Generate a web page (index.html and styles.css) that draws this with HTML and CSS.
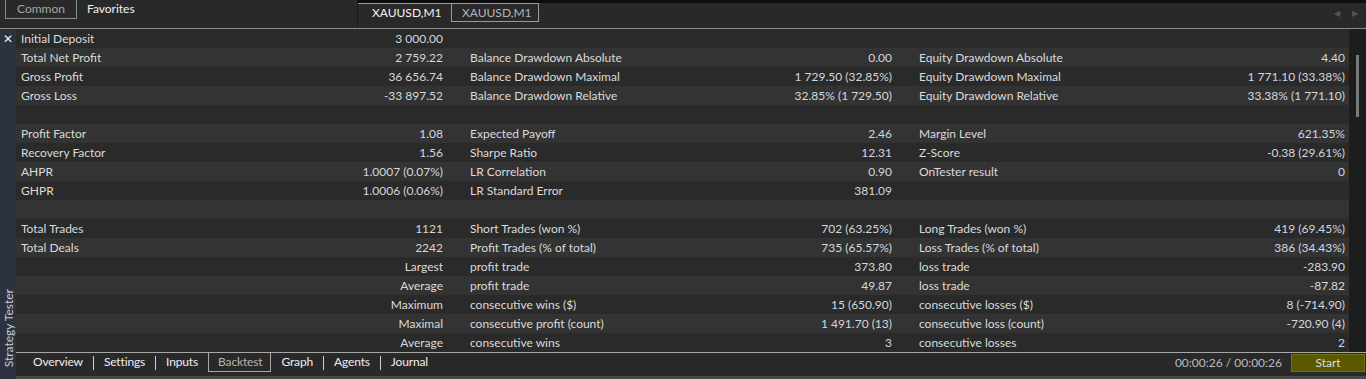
FILE: index.html
```html
<!DOCTYPE html>
<html>
<head>
<meta charset="utf-8">
<link rel="stylesheet" href="styles.css">
</head>
<body>
<div class="top">
  <div class="group-tabs">
    <span class="gtab boxed">Common</span>
    <span class="gtab active">Favorites</span>
  </div>
  <div class="chart-strip">
    <div class="ctab active">XAUUSD,M1</div>
    <div class="ctab outline">XAUUSD,M1</div>
    <div class="strip-fill"></div>
    <div class="arrows"><span class="arr">&#9664;</span><span class="arr">&#9654;</span></div>
  </div>
</div>
<div class="body">
  <div class="sidebar">
    <span class="close">&#10005;</span>
    <span class="vtitle">Strategy Tester</span>
  </div>
  <div class="content">
    <div class="main">
      <div class="table">
        <div class="row"><div class="cell"><span>Initial Deposit</span><span class="v">3 000.00</span></div><div class="cell"></div><div class="cell last"></div></div>
        <div class="row"><div class="cell"><span>Total Net Profit</span><span class="v">2 759.22</span></div><div class="cell"><span>Balance Drawdown Absolute</span><span class="v">0.00</span></div><div class="cell last"><span>Equity Drawdown Absolute</span><span class="v">4.40</span></div></div>
        <div class="row"><div class="cell"><span>Gross Profit</span><span class="v">36 656.74</span></div><div class="cell"><span>Balance Drawdown Maximal</span><span class="v">1 729.50 (32.85%)</span></div><div class="cell last"><span>Equity Drawdown Maximal</span><span class="v">1 771.10 (33.38%)</span></div></div>
        <div class="row"><div class="cell"><span>Gross Loss</span><span class="v">-33 897.52</span></div><div class="cell"><span>Balance Drawdown Relative</span><span class="v">32.85% (1 729.50)</span></div><div class="cell last"><span>Equity Drawdown Relative</span><span class="v">33.38% (1 771.10)</span></div></div>
        <div class="row"><div class="cell"></div><div class="cell"></div><div class="cell last"></div></div>
        <div class="row"><div class="cell"><span>Profit Factor</span><span class="v">1.08</span></div><div class="cell"><span>Expected Payoff</span><span class="v">2.46</span></div><div class="cell last"><span>Margin Level</span><span class="v">621.35%</span></div></div>
        <div class="row"><div class="cell"><span>Recovery Factor</span><span class="v">1.56</span></div><div class="cell"><span>Sharpe Ratio</span><span class="v">12.31</span></div><div class="cell last"><span>Z-Score</span><span class="v">-0.38 (29.61%)</span></div></div>
        <div class="row"><div class="cell"><span>AHPR</span><span class="v">1.0007 (0.07%)</span></div><div class="cell"><span>LR Correlation</span><span class="v">0.90</span></div><div class="cell last"><span>OnTester result</span><span class="v">0</span></div></div>
        <div class="row"><div class="cell"><span>GHPR</span><span class="v">1.0006 (0.06%)</span></div><div class="cell"><span>LR Standard Error</span><span class="v">381.09</span></div><div class="cell last"></div></div>
        <div class="row"><div class="cell"></div><div class="cell"></div><div class="cell last"></div></div>
        <div class="row"><div class="cell"><span>Total Trades</span><span class="v">1121</span></div><div class="cell"><span>Short Trades (won %)</span><span class="v">702 (63.25%)</span></div><div class="cell last"><span>Long Trades (won %)</span><span class="v">419 (69.45%)</span></div></div>
        <div class="row"><div class="cell"><span>Total Deals</span><span class="v">2242</span></div><div class="cell"><span>Profit Trades (% of total)</span><span class="v">735 (65.57%)</span></div><div class="cell last"><span>Loss Trades (% of total)</span><span class="v">386 (34.43%)</span></div></div>
        <div class="row"><div class="cell"><span></span><span class="lbl-r">Largest</span></div><div class="cell"><span>profit trade</span><span class="v">373.80</span></div><div class="cell last"><span>loss trade</span><span class="v">-283.90</span></div></div>
        <div class="row"><div class="cell"><span></span><span class="lbl-r">Average</span></div><div class="cell"><span>profit trade</span><span class="v">49.87</span></div><div class="cell last"><span>loss trade</span><span class="v">-87.82</span></div></div>
        <div class="row"><div class="cell"><span></span><span class="lbl-r">Maximum</span></div><div class="cell"><span>consecutive wins ($)</span><span class="v">15 (650.90)</span></div><div class="cell last"><span>consecutive losses ($)</span><span class="v">8 (-714.90)</span></div></div>
        <div class="row"><div class="cell"><span></span><span class="lbl-r">Maximal</span></div><div class="cell"><span>consecutive profit (count)</span><span class="v">1 491.70 (13)</span></div><div class="cell last"><span>consecutive loss (count)</span><span class="v">-720.90 (4)</span></div></div>
        <div class="row"><div class="cell"><span></span><span class="lbl-r">Average</span></div><div class="cell"><span>consecutive wins</span><span class="v">3</span></div><div class="cell last"><span>consecutive losses</span><span class="v">2</span></div></div>
      </div>
      <div class="scrollbar"><div class="thumb"></div></div>
    </div>
    <div class="bottom">
      <div class="btabs">
        <span class="btab">Overview</span><span class="sep"></span>
        <span class="btab">Settings</span><span class="sep"></span>
        <span class="btab">Inputs</span>
        <span class="btab active">Backtest</span>
        <span class="btab">Graph</span><span class="sep"></span>
        <span class="btab">Agents</span><span class="sep"></span>
        <span class="btab">Journal</span>
      </div>
      <div class="status">
        <span class="time">00:00:26 / 00:00:26</span>
        <button class="start">Start</button>
      </div>
    </div>
    <div class="footer-band"></div>
  </div>
</div>
</body>
</html>
```

FILE: styles.css
```css
* { box-sizing: border-box; }
html, body { margin: 0; padding: 0; }
body {
  width: 1366px;
  height: 379px;
  overflow: hidden;
  background: #292929;
  font-family: Lato, "Noto Sans", sans-serif;
  font-size: 12px;
  color: #dadada;
}
.top {
  height: 29px;
  display: flex;
  border-bottom: 1px solid #8c8c8c;
  background: #292929;
}
.group-tabs {
  width: 357px;
  display: flex;
  align-items: flex-start;
  padding-left: 5px;
}
.gtab {
  height: 19px;
  line-height: 17px;
  padding: 0 10px;
}
.gtab.boxed {
  border: 1px solid #8a8a8a;
  border-top: none;
  color: #a6a6a6;
  width: 72px;
  text-align: center;
  padding: 0;
}
.gtab.active { color: #f2f2f2; padding-left: 10px; }
.chart-strip {
  flex: 1;
  display: flex;
  align-items: stretch;
  border-top: 3px solid #0d0d0d;
  border-left: 1px solid #1a1a1a;
}
.ctab {
  height: 19px;
  line-height: 18px;
  padding: 0 14px;
}
.ctab.active {
  width: 93px;
  height: 25px;
  color: #f4f4f4;
  border-top: 1px solid #9a9a9a;
  padding-left: 14px;
}
.ctab.outline {
  width: 88px;
  color: #b4b4b4;
  border: 1px solid #9a9a9a;
  padding-left: 10px;
}
.strip-fill { flex: 1; }
.arrows {
  display: flex;
  gap: 12px;
  padding: 5px 8px 0 0;
  font-size: 8px;
  color: #555;
}
.body {
  display: flex;
  height: 350px;
}
.sidebar {
  width: 16px;
  background: #2c333e;
  display: flex;
  flex-direction: column;
  justify-content: space-between;
  align-items: center;
}
.close {
  color: #f0f0f0;
  font-size: 12px;
  line-height: 19px;
}
.vtitle {
  writing-mode: vertical-rl;
  transform: rotate(180deg);
  color: #c8ccd2;
  font-size: 12px;
  padding-top: 7px;
  margin-bottom: 5px;
}
.content {
  flex: 1;
  display: flex;
  flex-direction: column;
}
.main {
  display: flex;
  height: 323px;
}
.table { flex: 1; }
.row {
  display: grid;
  grid-template-columns: 449px 449px 1fr;
  height: 19px;
  line-height: 19px;
  background: #2a2a2a;
}
.row:nth-child(even) { background: #333333; }
.cell {
  display: flex;
  justify-content: space-between;
  padding: 0 22px 0 5px;
  white-space: nowrap;
}
.cell.last { padding-right: 4px; }
.v { color: #d2d7de; }
.lbl-r { color: #dadada; }
.scrollbar {
  width: 17px;
  background: #1d1d1d;
  position: relative;
}
.thumb {
  position: absolute;
  left: 7px;
  top: 26px;
  width: 3px;
  height: 62px;
  background: #7a7a7a;
}
.bottom {
  height: 20px;
  border-top: 1px solid #a8a8a8;
  display: flex;
  justify-content: space-between;
  background: #292929;
}
.btabs {
  display: flex;
  align-items: flex-start;
  padding-left: 7px;
}
.btab {
  color: #eeeeee;
  padding: 0 10px;
  line-height: 18px;
  letter-spacing: -0.15px;
}
.btab.active {
  color: #b4b4b4;
  border: 1px solid #a8a8a8;
  border-top: none;
  height: 20px;
  margin-top: -1px;
  padding: 1px 8px 0 9px;
}
.sep {
  width: 1px;
  height: 14px;
  margin-top: 3px;
  background: #d0d0d0;
}
.status {
  display: flex;
  align-items: flex-start;
  gap: 9px;
  padding-right: 1px;
}
.time {
  color: #b8bcc2;
  line-height: 20px;
}
.start {
  width: 74px;
  height: 18px;
  margin-top: 1px;
  background: #5b5800;
  border: 1px solid #75730c;
  color: #dedede;
  font-family: Lato, "Noto Sans", sans-serif;
  font-size: 12px;
  padding: 0;
  line-height: 16px;
}
.footer-band {
  flex: 1;
  background: #292929;
  border-bottom: 3px solid #4a4a4a;
}
```
